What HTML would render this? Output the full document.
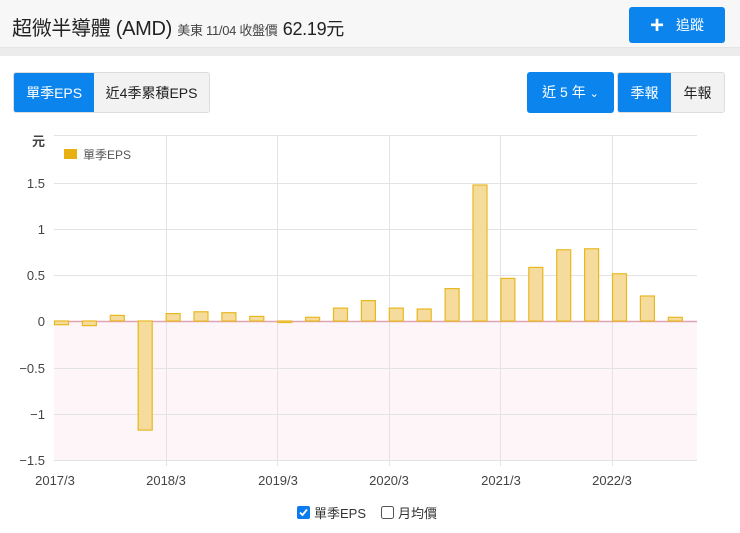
<!DOCTYPE html>
<html><head><meta charset="utf-8"><style>
*{margin:0;padding:0;box-sizing:border-box}
body{width:740px;height:533px;background:#fff;font-family:"Liberation Sans","Noto Sans CJK TC",sans-serif;overflow:hidden;position:relative;color:#333}
.hdr{position:absolute;left:0;top:0;width:740px;height:48px;background:#f7f7f7;border-bottom:1px solid #e4e4e4}
.band{position:absolute;left:0;top:48px;width:740px;height:8px;background:#ececec}
.title{position:absolute;left:12px;top:12px;font-size:20px;color:#222;white-space:nowrap;letter-spacing:-0.3px}
.title .s{font-size:13px;color:#444}
.title .p{font-size:18px;color:#222}
.btn{position:absolute;color:#fff;background:#0b84ee;border-radius:3px;font-size:14px;text-align:center}
.grp{position:absolute;border:1px solid #ddd;border-radius:3px;overflow:hidden;display:flex;height:41px}
.grp div{display:flex;align-items:center;justify-content:center;font-size:14px;color:#222;background:#f2f2f2}
.grp .on{background:#0b84ee;color:#fff}
</style></head><body>
<div class="hdr"></div><div class="band"></div>
<div class="title">超微半導體 (AMD) <span class="s">美東 11/04 收盤價</span> <span class="p">62.19元</span></div>
<div class="btn" style="left:629px;top:7px;width:96px;height:36px;line-height:36px"><span style="font-size:24px;font-weight:bold;vertical-align:-3px;margin-right:12px">+</span>追蹤</div>
<div class="grp" style="left:13px;top:72px;width:197px"><div class="on" style="width:81px">單季EPS</div><div style="width:116px">近4季累積EPS</div></div>
<div class="btn" style="left:527px;top:72px;width:87px;height:41px;line-height:41px">近 5 年 <span style="font-size:11px">&#8964;</span></div>
<div class="grp" style="left:617px;top:72px;width:108px"><div class="on" style="width:54px">季報</div><div style="width:54px">年報</div></div>
<svg style="position:absolute;left:0;top:0" width="740" height="533">
<rect x="54" y="321" width="643" height="139" fill="#fdf5f7"/>
<g stroke="#e3e3e3" stroke-width="1">
<line x1="54" y1="135.5" x2="697" y2="135.5"/><line x1="54" y1="183.5" x2="697" y2="183.5"/><line x1="54" y1="229.5" x2="697" y2="229.5"/><line x1="54" y1="275.5" x2="697" y2="275.5"/><line x1="54" y1="368.5" x2="697" y2="368.5"/><line x1="54" y1="414.5" x2="697" y2="414.5"/><line x1="54" y1="460.5" x2="697" y2="460.5"/>
<line x1="166.5" y1="135" x2="166.5" y2="466"/><line x1="277.5" y1="135" x2="277.5" y2="466"/><line x1="389.5" y1="135" x2="389.5" y2="466"/><line x1="500.5" y1="135" x2="500.5" y2="466"/><line x1="612.5" y1="135" x2="612.5" y2="466"/>
</g>
<line x1="54" y1="321.5" x2="697" y2="321.5" stroke="#dfa3b3" stroke-width="1.5"/>
<g fill="#f5dc9c" stroke="#e8b820" stroke-width="1.2" id="bars"></g>
<g font-family="Liberation Sans,sans-serif" font-size="13" fill="#444" text-anchor="end">
<text x="45" y="146" font-family="Noto Sans CJK TC" font-weight="bold" font-size="13">元</text>
<text x="45" y="188">1.5</text><text x="45" y="234">1</text><text x="45" y="280">0.5</text><text x="45" y="326">0</text><text x="45" y="373">−0.5</text><text x="45" y="419">−1</text><text x="45" y="465">−1.5</text>
</g>
<g font-family="Liberation Sans,sans-serif" font-size="13" fill="#444" text-anchor="middle">
<text x="55" y="485">2017/3</text><text x="166" y="485">2018/3</text><text x="278" y="485">2019/3</text><text x="389" y="485">2020/3</text><text x="501" y="485">2021/3</text><text x="612" y="485">2022/3</text>
</g>
<rect x="64" y="149" width="13" height="10" fill="#e8b010"/>
<text x="83" y="159" font-family="Liberation Sans,Noto Sans CJK TC,sans-serif" font-size="12" fill="#555">單季EPS</text>
<rect x="297" y="506" width="13" height="13" rx="2" fill="#0b7cf0"/>
<path d="M300 512.5l2.5 2.5 4.5-5.5" stroke="#fff" stroke-width="1.8" fill="none"/>
<text x="314" y="518" font-family="Liberation Sans,Noto Sans CJK TC,sans-serif" font-size="13" fill="#333">單季EPS</text>
<rect x="381.5" y="506.5" width="12" height="12" rx="2" fill="#fff" stroke="#555"/>
<text x="398" y="518" font-family="Liberation Sans,Noto Sans CJK TC,sans-serif" font-size="13" fill="#333">月均價</text>
</svg>
<script>
var v=[-0.04,-0.05,0.06,-1.18,0.08,0.10,0.09,0.05,-0.01,0.04,0.14,0.22,0.14,0.13,0.35,1.47,0.46,0.58,0.77,0.78,0.51,0.27,0.04];
var g=document.getElementById('bars'),s='';
v.forEach(function(d,i){var x=54.5+27.9*i,h=Math.abs(d)*92.5,y=d>=0?321-h:321;s+='<rect x="'+x.toFixed(1)+'" y="'+y.toFixed(1)+'" width="14" height="'+Math.max(h,1.5).toFixed(1)+'"/>';});
g.innerHTML=s;
</script>
</body></html>
